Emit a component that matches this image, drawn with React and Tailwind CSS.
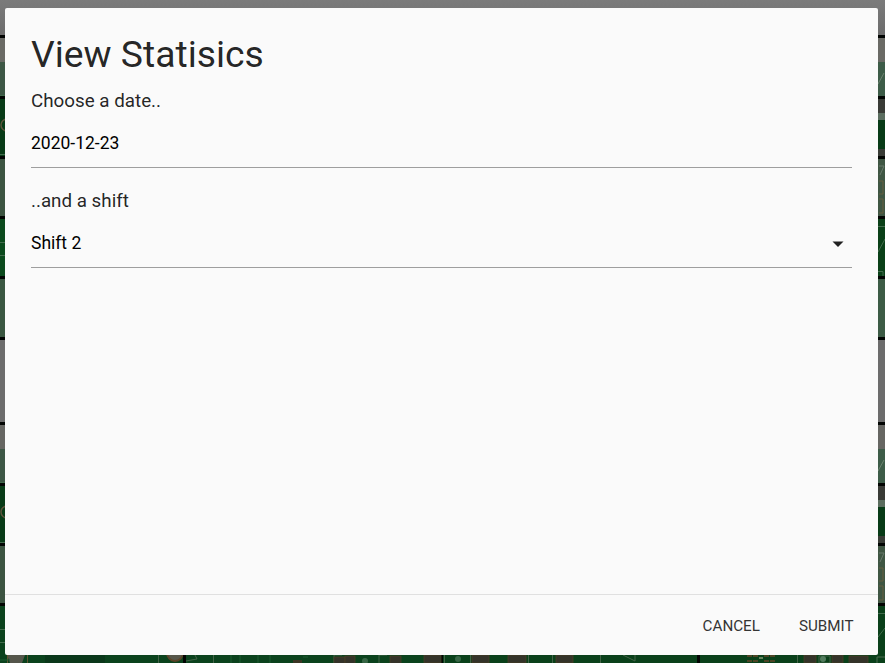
const bands = [
  [0, 35, '#747474', '#747474'],
  [38, 24, '#6a6a65', '#6a6a65'],
  [62, 34, '#3d5745', '#3d5c48'],
  [99, 57, '#083b17', '#083b17'],
  [159, 57, '#3c5441', '#3f5643'],
  [219, 57, '#0b4a1d', '#0a4018'],
  [279, 58, '#3a5741', '#3c5b45'],
  [340, 82, '#6c6c6c', '#6c6c6c'],
  [425, 24, '#666662', '#666662'],
  [449, 34, '#3d5745', '#3d5c48'],
  [486, 57, '#083b17', '#083b17'],
  [546, 57, '#3c5441', '#3f5643'],
  [606, 57, '#0b421d', '#0a401a'],
];

const chips = [
  [334, 657, 11], [345, 656, 10], [390, 656, 11], [424, 655, 17],
  [472, 655, 17], [508, 655, 18], [556, 655, 17], [804, 655, 12],
  [832, 655, 11], [849, 656, 19],
];

function CircuitBackdrop() {
  return (
    <svg className="absolute inset-0" width="885" height="663" viewBox="0 0 885 663" aria-hidden="true">
      <defs>
        <linearGradient id="shade" x1="0" y1="0" x2="0" y2="1">
          <stop offset="0" stopColor="#7b7b7b" />
          <stop offset="1" stopColor="#6c6c6c" />
        </linearGradient>
      </defs>
      <rect width="885" height="663" fill="#020503" />
      {bands.map(([y, h, left, right]) => (
        <g key={y}>
          <rect x="0" y={y} width="440" height={h} fill={left} />
          <rect x="440" y={y} width="445" height={h} fill={right} />
        </g>
      ))}
      <rect width="885" height="35" fill="url(#shade)" />
      <g fill="none" stroke="#426b4c" strokeWidth="1">
        <path d="M0 95.500H5M0 154.500H5M0 242.500H5M0 255.500H5M0 482.500H5M0 542.500H5M0 629.500H5M0 642.500H5" />
        <path d="M878 226.500H885M878 271.500H883V276M878 613.500H885M878 252L885 239M878 637L885 628" />
      </g>
      <g fill="none" stroke="#5d533b" strokeWidth="1.500">
        <circle cx="7" cy="125" r="6" />
        <circle cx="7" cy="512" r="6" />
      </g>
      {[99, 486].map((y) => (
        <g key={y}>
          <rect x="878" y={y} width="7" height="14" fill="#393b36" />
          <rect x="878" y={y + 14} width="7" height="7" fill="#5b6d5f" />
          <rect x="878" y={y + 50} width="7" height="7" fill="#393c36" />
          <path d={`M878 ${y - 15}L884 ${y - 26}`} stroke="#6c8370" />
        </g>
      ))}
      {[159, 546].map((y) => (
        <g key={y} fill="none">
          <path d={`M879 ${y + 7}H884L880 ${y + 16}`} stroke="#68796b" />
          <path d={`M879 ${y + 22}H883V${y + 35}H879M879 ${y + 40}H883V${y + 54}H879`} stroke="#665e40" />
        </g>
      ))}
      <path d="M7 655H25L22 663H10Z" fill="#55564b" />
      <path d="M7.500 655V663M27.500 655V663" stroke="#60542f" />
      <rect x="45" y="655" width="60" height="8" fill="#0a371a" />
      <circle cx="175" cy="653" r="8" fill="#555548" stroke="#5a4328" strokeWidth="2" />
      <path d="M158.500 655V663M186 661L197 659L195 655M213.500 655V663M334 663V655H342M379 663V655H387M444.500 655V663M470.500 655V663M528.500 655V663M552.500 655V663M623 655L635 661V655M600.500 655V663M797.500 655V663M819 656H830V663H819Z" fill="none" stroke="#426246" />
      <path d="M0 660H10M303 657H308M231 655V663M240 655V663M258 655V663M270 655V663" stroke="#1c5a30" />
      <rect x="183" y="655" width="3" height="8" fill="#020402" />
      <rect x="440" y="655" width="3" height="8" fill="#020402" />
      <rect x="697" y="655" width="3" height="8" fill="#020402" />
      <rect x="293" y="660" width="9" height="3" fill="#3c3524" />
      {chips.map(([x, y, w]) => (
        <rect key={x} x={x} y={y} width={w} height="8" fill="#343329" stroke="#493f25" strokeWidth=".8" />
      ))}
      <circle cx="365" cy="661" r="3" fill="#376645" />
      <circle cx="458" cy="659" r="3" fill="#376645" />
      <circle cx="823" cy="659" r="3" fill="#537c5e" />
      <path d="M747 656H758M764 656H775M747 661H758M764 661H775" stroke="#4e4425" strokeWidth="2" strokeDasharray="5 1" />
      <path d="M759 658H763" stroke="#65825c" strokeWidth="2" />
      <path d="M877 663V657H885" fill="none" stroke="#4b6a4e" />
    </svg>
  );
}

export default function App() {
  return (
    <div className="relative h-[663px] w-[885px] overflow-hidden pt-2 pr-[7px] pl-[5px] font-['Roboto',sans-serif]">
      <CircuitBackdrop />
      <main className="relative flex h-[647px] flex-col rounded-[2px] bg-[#fafafa] text-black/87">
        <div className="flex-1 px-[26px] pt-6">
          <h1 className="h-[52px] text-[37.3px] leading-[44px] whitespace-nowrap">View Statisics</h1>
          <section className="h-[92px] pt-[5px]">
            <h2 className="text-[18.8px] leading-[25px]">Choose a date..</h2>
            <div className="flex h-[54px] items-center border-b border-[#9e9e9e] pt-[6px] text-[17.5px] text-black">
              <span>2020-12-23</span>
            </div>
          </section>
          <section className="mt-2 h-[92px] pt-[5px]">
            <h2 className="text-[18.8px] leading-[25px]">..and a shift</h2>
            <div className="flex h-[54px] items-center justify-between border-b border-[#9e9e9e] pt-[6px] pr-2 text-[17.5px] text-black">
              <span>Shift 2</span>
              <svg width="12" height="6" viewBox="0 0 12 6" aria-hidden="true">
                <path d="M.5 .5H11.500L6 6Z" fill="#202020" />
              </svg>
            </div>
          </section>
        </div>
        <footer className="flex h-[61px] items-center justify-end gap-[39px] border-t border-[#e0e0e0] pt-[2px] pr-[24.5px] text-[15.2px] text-[#343434]">
          <button>CANCEL</button>
          <button>SUBMIT</button>
        </footer>
      </main>
    </div>
  );
}
